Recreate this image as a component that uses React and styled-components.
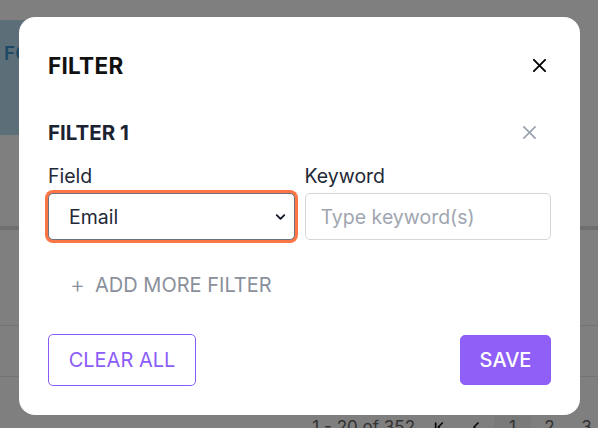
import React, { useState } from 'react';
import styled, { createGlobalStyle } from 'styled-components';
import { ChevronDown, ChevronFirst, ChevronLeft } from 'lucide-react';

const GlobalStyle = createGlobalStyle`
  html, body {
    margin: 0;
    padding: 0;
    background: #ffffff;
    font-family: Inter, "Noto Sans", sans-serif;
    overflow: hidden;
  }
  * { box-sizing: border-box; }
`;

/* ---- page behind the dialog ---- */

const Page = styled.div`
  width: 598px;
  height: 428px;
  padding-top: 20px;
  display: flex;
  flex-direction: column;
`;

const Banner = styled.div`
  width: 420px;
  height: 115px;
  background: #b9def2;
  padding: 22px 0 0 4px;
  color: #3a93cb;
  font-size: 19px;
  font-weight: 600;
`;

const TableHead = styled.div`
  height: 95px;
  border-bottom: 4px solid #dedede;
`;

const TableRow = styled.div`
  height: ${p => p.$h}px;
  border-bottom: 1px solid #e6e6e6;
`;

const Pagination = styled.div`
  flex: 1;
  display: flex;
  justify-content: flex-end;
  align-items: flex-end;
  margin-right: -7px;
  font-size: 17px;
  color: #666;
  line-height: 22px;
  margin-bottom: -10px;
`;

const PageInfo = styled.span`
  margin-right: 5px;
`;

const PageBtn = styled.span`
  width: 37px;
  height: 22px;
  display: flex;
  align-items: center;
  justify-content: center;
  color: ${p => (p.$icon ? '#111' : '#666')};
  background: ${p => (p.$active ? '#f4f4f4' : 'transparent')};
`;

/* ---- dialog ---- */

const Overlay = styled.div`
  position: fixed;
  inset: 0;
  background: rgba(0, 0, 0, 0.5);
  display: flex;
  justify-content: center;
  align-items: flex-start;
  padding-top: 17px;
`;

const Modal = styled.div`
  width: 561px;
  margin-left: 1px;
  background: #fff;
  border-radius: 16px;
  padding: 33px 29px 29px;
  display: flex;
  flex-direction: column;
`;

const Header = styled.div`
  display: flex;
  align-items: center;
  justify-content: space-between;
  height: 30px;
`;

const Title = styled.h2`
  margin: 0;
  font-size: 22.5px;
  font-weight: 700;
  color: #111;
  letter-spacing: 0.3px;
`;

const IconButton = styled.button`
  border: none;
  background: none;
  padding: 0;
  margin-right: ${p => p.$mr}px;
  display: flex;
  align-items: center;
  justify-content: center;
  color: ${p => p.$color};
  cursor: pointer;
`;

const FilterHead = styled.div`
  margin-top: 39px;
  height: 26px;
  display: flex;
  align-items: center;
  justify-content: space-between;
`;

const FilterTitle = styled.h3`
  margin: 0;
  font-size: 20.5px;
  font-weight: 700;
  color: #1b2231;
`;

const Fields = styled.div`
  margin-top: 19px;
  display: grid;
  grid-template-columns: repeat(2, minmax(0, 1fr));
  column-gap: 10px;
`;

const FieldCol = styled.div`
  display: flex;
  flex-direction: column;
  gap: 5px;
`;

const Label = styled.label`
  font-size: 19.5px;
  line-height: 24px;
  color: #1f2937;
`;

const SelectWrap = styled.div`
  position: relative;
  height: 47px;
`;

const Select = styled.select`
  appearance: none;
  width: 100%;
  height: 47px;
  border: 1px solid #6b7280;
  border-radius: 5px;
  box-shadow: 0 0 0 3px #ff7545;
  outline: none;
  background: #fff;
  padding: 0 30px 0 20px;
  font-family: inherit;
  font-size: 19.5px;
  color: #1f2937;
`;

const Chevron = styled.span`
  position: absolute;
  right: 7px;
  top: 50%;
  transform: translateY(-50%);
  display: flex;
  color: #111827;
  pointer-events: none;
`;

const Input = styled.input`
  width: 100%;
  height: 47px;
  border: 1px solid #d4d6dc;
  border-radius: 5px;
  padding: 0 15px;
  font-family: inherit;
  font-size: 19.5px;
  color: #1f2937;
  outline: none;

  &::placeholder {
    color: #a0a6b1;
  }
`;

const AddMore = styled.button`
  margin-top: 33px;
  align-self: flex-start;
  margin-left: 22px;
  border: none;
  background: none;
  padding: 0;
  height: 24px;
  display: flex;
  align-items: center;
  gap: 10px;
  font-family: inherit;
  font-size: 20px;
  color: #8a909b;
  cursor: pointer;
`;

const Plus = styled.span`
  font-size: 23px;
  font-weight: 300;
`;

const Footer = styled.div`
  margin-top: 37px;
  display: flex;
  justify-content: space-between;
  align-items: center;
  height: 52px;
`;

const Button = styled.button`
  height: ${p => (p.$primary ? 50 : 52)}px;
  width: ${p => (p.$primary ? 91 : 148)}px;
  padding: 0;
  border-radius: 5px;
  border: 1px solid #8b5cf6;
  background: ${p => (p.$primary ? '#8f5ff7' : '#fff')};
  color: ${p => (p.$primary ? '#fff' : '#8b5cf6')};
  font-family: inherit;
  font-size: 20px;
  font-weight: ${p => (p.$primary ? 500 : 400)};
  cursor: pointer;
`;

const CloseIcon = ({ size, stroke }) => (
  <svg width={size} height={size} viewBox="0 0 14 14" fill="none">
    <path d="M1 1L13 13M13 1L1 13" stroke="currentColor" strokeWidth={stroke} strokeLinecap="square" />
  </svg>
);

export default function App() {
  const [field, setField] = useState('email');
  const [keyword, setKeyword] = useState('');

  return (
    <>
      <GlobalStyle />
      <Page>
        <Banner>FOLLOWERS</Banner>
        <TableHead />
        <TableRow $h={96} />
        <TableRow $h={51} />
        <Pagination>
          <PageInfo>1 - 20 of 352</PageInfo>
          <PageBtn $icon><ChevronFirst size={16} strokeWidth={2.5} /></PageBtn>
          <PageBtn $icon><ChevronLeft size={16} strokeWidth={2.5} /></PageBtn>
          <PageBtn $active>1</PageBtn>
          <PageBtn>2</PageBtn>
          <PageBtn>3</PageBtn>
        </Pagination>
      </Page>

      <Overlay>
        <Modal>
          <Header>
            <Title>FILTER</Title>
            <IconButton $color="#000" $mr={5} aria-label="Close">
              <CloseIcon size={13} stroke={2} />
            </IconButton>
          </Header>

          <FilterHead>
            <FilterTitle>FILTER 1</FilterTitle>
            <IconButton $color="#9aa2af" $mr={15} aria-label="Remove filter">
              <CloseIcon size={13} stroke={1.8} />
            </IconButton>
          </FilterHead>

          <Fields>
            <FieldCol>
              <Label>Field</Label>
              <SelectWrap>
                <Select value={field} onChange={e => setField(e.target.value)}>
                  <option value="email">Email</option>
                  <option value="name">Name</option>
                  <option value="phone">Phone</option>
                </Select>
                <Chevron>
                  <ChevronDown size={15} strokeWidth={3} />
                </Chevron>
              </SelectWrap>
            </FieldCol>
            <FieldCol>
              <Label>Keyword</Label>
              <Input
                type="text"
                placeholder="Type keyword(s)"
                value={keyword}
                onChange={e => setKeyword(e.target.value)}
              />
            </FieldCol>
          </Fields>

          <AddMore>
            <Plus>+</Plus>
            ADD MORE FILTER
          </AddMore>

          <Footer>
            <Button>CLEAR ALL</Button>
            <Button $primary>SAVE</Button>
          </Footer>
        </Modal>
      </Overlay>
    </>
  );
}
